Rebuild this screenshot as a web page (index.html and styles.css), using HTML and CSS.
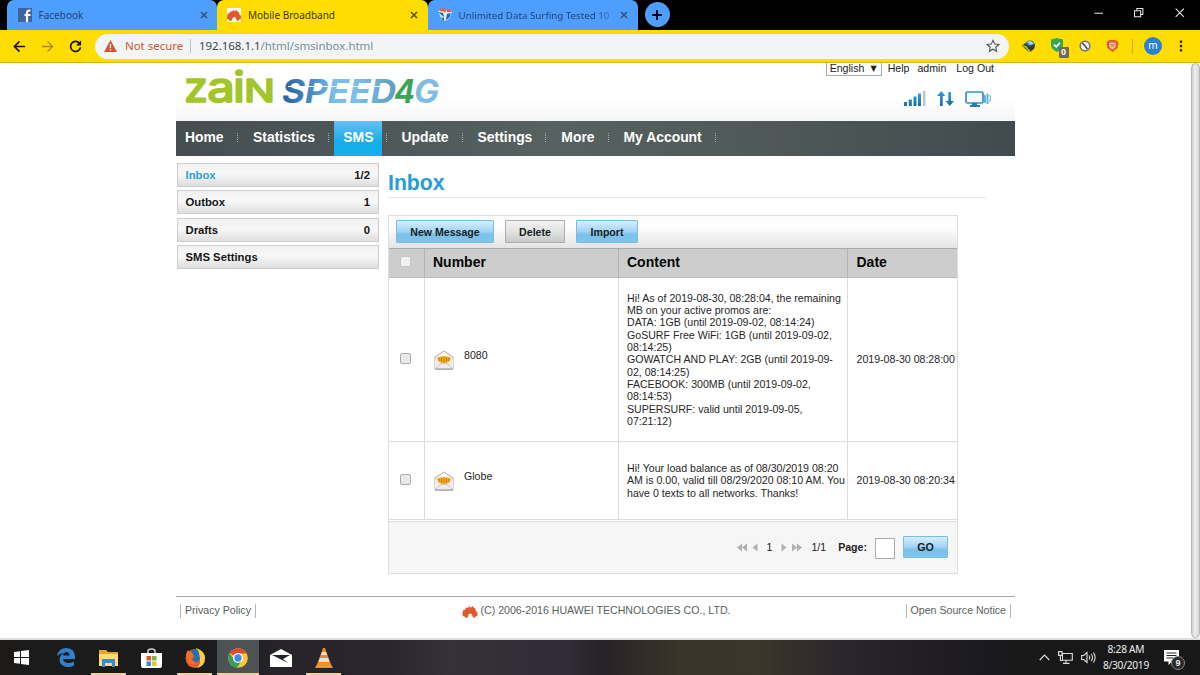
FILE: index.html
```html
<!DOCTYPE html>
<html lang="en">
<head>
<meta charset="utf-8">
<title>Mobile Broadband</title>
<link rel="stylesheet" href="styles.css">
</head>
<body>
<svg width="0" height="0" class="defs">
  <defs>
    <linearGradient id="speed" x1="0" x2="1" y1="0" y2="0">
      <stop offset="0" stop-color="#2a609f"/><stop offset=".28" stop-color="#4c8fcb"/><stop offset=".45" stop-color="#7bbdec"/><stop offset=".65" stop-color="#7bbdec"/><stop offset="1" stop-color="#5d9ebb"/>
    </linearGradient>
    <linearGradient id="sky" x1="0" x2="0" y1="0" y2="1"><stop offset="0" stop-color="#2ba4dd"/><stop offset="1" stop-color="#1c69a8"/></linearGradient>
    <symbol id="huawei" viewBox="0 0 16 14">
      <path d="M0 8 1 5 3 5 3 3 6 3 7 1 9 3 11 1 12 3 14 4 14 6 16 8 16 12 14 12 13 14 11 13 10 10 8 9 6 11 6 13 3 14 2 12 0 12z"/>
    </symbol>
    <symbol id="mail" viewBox="0 0 20 20">
      <path d="M1 7 10 1l9 6v12H1z" fill="#f3f1ee" stroke="#b3aaa5"/>
      <path d="M3.500 6.500 10 3l6.500 3.500v4L10 14l-6.500-3.500z" fill="#fff"/>
      <path d="M3 7.500q7-3 14 0l-1.500 4q-5.500 3-11 0z" fill="#f6a81c"/>
      <path d="M5 8v3M7.500 7.500v4M10 7.500v4.500M12.500 7.500v4M15 8v3" stroke="#c76d12" stroke-width=".8"/>
      <path d="m1 8 6 5.500h6L19 8v11H1z" fill="#efedeb"/>
      <path d="m1.500 18.500 5.500-5h6l5.500 5" fill="none" stroke="#cbc5c1"/>
      <path d="M1 19h18" stroke="#998f8a"/>
    </symbol>
  </defs>
</svg>

<div class="tabstrip">
  <div class="tab">
    <svg class="favicon" viewBox="0 0 14 14"><path fill="#3f639f" d="M0 0h14v14H0z"/><path fill="none" stroke="#fff" stroke-width="2.200" d="M12.500 2.500h-1.300Q9 2.500 9 5v9M6.500 7h6"/></svg>
    <span class="title">Facebook</span>
    <svg class="close" viewBox="0 0 8 8"><path d="m1 1 6 6M7 1 1 7"/></svg>
  </div>
  <div class="tab active">
    <svg class="favicon" viewBox="0 0 14 14"><path fill="#fff" d="M0 0h14v14H0z"/><use href="#huawei" y="1" width="14" height="12" fill="#e4572e"/></svg>
    <span class="title">Mobile Broadband</span>
    <svg class="close" viewBox="0 0 8 8"><path d="m1 1 6 6M7 1 1 7"/></svg>
  </div>
  <div class="tab third">
    <svg class="favicon" viewBox="0 0 14 14"><path fill="#dceaf2" d="m0 3 7-1 7 2-3 7-4 2-4-3z"/><path fill="#e26140" d="m2 0 6 1v3L2 3zM9 1l3 0 1 3-4 0z"/><path fill="#2263a6" d="m0 4 5 1 1 4zM13 5 9 6l-1 6 3-2zM3 9l3 1v3z"/></svg>
    <span class="title fade">Unlimited Data Surfing Tested 10</span>
    <svg class="close" viewBox="0 0 8 8"><path d="m1 1 6 6M7 1 1 7"/></svg>
  </div>
  <div class="newtab"><svg viewBox="0 0 10 10"><path d="M5 0v10M0 5h10"/></svg></div>
  <div class="winbtns">
    <svg viewBox="0 0 10 10"><path d="M.5 5.500h9"/></svg>
    <svg viewBox="0 0 10 10"><path d="M.5 2.800h6.500v6.500H.5zM3 2.500V.6h6.300v6.300H7.300"/></svg>
    <svg viewBox="0 0 10 10"><path d="m.7.7 8.600 8.600M9.300.7.7 9.300"/></svg>
  </div>
</div>

<div class="toolbar">
  <div class="navbtns">
    <svg viewBox="0 0 14 14"><path d="M13 7H2M7 1.500 1.500 7 7 12.500"/></svg>
    <svg class="off" viewBox="0 0 14 14"><path d="M1 7h11M7 1.500 12.500 7 7 12.500"/></svg>
    <svg viewBox="0 0 14 14"><path d="M11.300 3.500A5.400 5.400 0 1 0 12.400 8"/><path d="M13 .5v5.500H7.500z" fill="#191600" stroke="none"/></svg>
  </div>
  <div class="omnibox">
    <svg class="warn" viewBox="0 0 13 12"><path d="M6.500 0 13 12H0z" fill="#d9532c"/><path d="M6.500 4v4M6.500 9v1.500" stroke="#fff" stroke-width="1.300"/></svg>
    <span class="insecure">Not secure</span>
    <span class="url"><b>192.168.1.1</b>/html/smsinbox.html</span>
    <svg class="star" viewBox="0 0 14 14"><path d="m7 1.300 1.700 3.800 4.100.4-3.100 2.800.9 4L7 10.200l-3.600 2.100.9-4-3.100-2.800 4.100-.4z"/></svg>
  </div>
  <div class="exts">
    <svg width="14" height="13" viewBox="0 0 14 13"><circle cx="8" cy="5.500" r="5" fill="#2f6e8e"/><path d="M5 2q4-3 7 2l-4 1z" fill="#a9d2e5"/><path d="m0 6 3-3 3 3 4 1-3 5z" fill="#35421f"/><path d="m1 6 3 1 3 4 4-3" fill="none" stroke="#c5bd2d" stroke-width="1.500"/><path d="m8 6 5-2-1 5-4 3z" fill="#3d3931"/></svg>
    <div class="shield"><svg width="14" height="14" viewBox="0 0 14 14"><path d="m7 0 6 1.500V7q0 4-6 7-6-3-6-7V1.500z" fill="#34a853"/><path d="m4 6.500 2.200 2.300L10 4.800" fill="none" stroke="#fff" stroke-width="1.800"/></svg><span class="badge">0</span></div>
    <svg width="12" height="12" viewBox="0 0 12 12"><circle cx="6" cy="6" r="4.800" fill="#f4f4f8" stroke="#75727c" stroke-width="1.600"/><path d="m3.500 3 5 6" stroke="#4b4754" stroke-width="1.500"/></svg>
    <svg width="13" height="12" viewBox="0 0 13 12"><path d="M2 1 4 0h5l2 1 1.500 2-1 5-5 4-5-4-1-5z" fill="#e8572f"/><path d="m3 3 2.500-.5h2L10 3l-.8 4.500-2.700 2-2.700-2z" fill="#fbd7bf"/><path d="m4 4.300 1.800.7h1.400L9 4.300M5 7l1.500-1L8 7" stroke="#e8572f" fill="none"/></svg>
    <i class="sep"></i>
    <span class="avatar">m</span>
    <svg width="4" height="12" viewBox="0 0 4 12"><path d="M.8.5h2.400v2.400H.8zM.8 4.800h2.400v2.400H.8zM.8 9.100h2.400v2.400H.8z" fill="#39301b"/></svg>
  </div>
</div>

<div class="viewport">
  <div class="page">
    <header>
      <svg class="logo" width="260" height="44" viewBox="0 0 260 44">
        <g class="zain"><text x="-1" y="36" font-size="41" textLength="24" lengthAdjust="spacingAndGlyphs">z</text><text x="22" y="36" font-size="41" textLength="28" lengthAdjust="spacingAndGlyphs">a</text><text x="48" y="36" font-size="41" textLength="12" lengthAdjust="spacingAndGlyphs">i</text><text x="59" y="36" font-size="31" textLength="31" lengthAdjust="spacingAndGlyphs">N</text></g>
        <g class="speed"><text x="97" y="36.500" font-size="32" fill="url(#speed)" textLength="114" lengthAdjust="spacingAndGlyphs">SPEED</text><text x="209" y="36.500" font-size="32" fill="#3ca45a" textLength="21" lengthAdjust="spacingAndGlyphs">4</text><text x="229" y="36.500" font-size="32" fill="#7fbde3" textLength="25" lengthAdjust="spacingAndGlyphs">G</text></g>
        <path d="M103 20.500h102" stroke="#fff" stroke-width="1.200"/>
      </svg>
      <div class="account">
        <div class="links"><span class="lang">English<i>▼</i></span><span>Help</span><span>admin</span><span>Log Out</span></div>
        <div class="status">
          <svg width="22" height="15" viewBox="0 0 22 15"><path fill="url(#sky)" d="M0 11h3v4H0zM4.800 8.500h3V15h-3zM9.500 5.500h3V15h-3zM14 2.500h3V15h-3z"/><path fill="#c4c4c4" d="M19 0h2.500v15H19z"/></svg>
          <svg width="17" height="16" viewBox="0 0 17 16"><path fill="url(#sky)" d="m4.300 0 4 5H5.700v10H3V5H0zM11.400 1H14v9h3l-4.300 5-4-5h2.700z"/></svg>
          <svg width="26" height="16" viewBox="0 0 26 16"><rect x="1" y="1" width="17" height="11" rx="1.500" fill="#f5fbff" stroke="#338fcb" stroke-width="1.700"/><path d="M7 12h5v2h3v2H5v-2h2z" fill="#2577b8"/><path d="M20 4v8M22.500 2.500v10.500" stroke="#5bb1e4" stroke-width="1.900"/><path d="M24.500 4q2 3.500 0 7" fill="none" stroke="#86c6ee" stroke-width="1.400"/></svg>
        </div>
      </div>
    </header>
    <nav><a>Home</a><a>Statistics</a><a class="on">SMS</a><a>Update</a><a>Settings</a><a>More</a><a>My Account</a></nav>
    <div class="columns">
      <aside>
        <div class="item on"><span>Inbox</span><span>1/2</span></div>
        <div class="item"><span>Outbox</span><span>1</span></div>
        <div class="item"><span>Drafts</span><span>0</span></div>
        <div class="item"><span>SMS Settings</span></div>
      </aside>
      <main>
        <h1>Inbox</h1>
        <section class="list">
          <div class="actions"><button class="blue new">New Message</button><button class="del">Delete</button><button class="blue imp">Import</button></div>
          <div class="row head"><div><i class="box"></i></div><div>Number</div><div>Content</div><div>Date</div></div>
          <div class="row first">
            <div><i class="box"></i></div>
            <div class="from"><svg width="20" height="20"><use href="#mail"/></svg><span>8080</span></div>
            <div class="body"><p>Hi! As of 2019-08-30, 08:28:04, the remaining<br>MB on your active promos are:<br>DATA: 1GB (until 2019-09-02, 08:14:24)<br>GoSURF Free WiFi: 1GB (until 2019-09-02,<br>08:14:25)<br>GOWATCH AND PLAY: 2GB (until 2019-09-<br>02, 08:14:25)<br>FACEBOOK: 300MB (until 2019-09-02,<br>08:14:53)<br>SUPERSURF: valid until 2019-09-05,<br>07:21:12)</p></div>
            <div>2019-08-30 08:28:00</div>
          </div>
          <div class="row second">
            <div><i class="box"></i></div>
            <div class="from"><svg width="20" height="20"><use href="#mail"/></svg><span>Globe</span></div>
            <div class="body"><p>Hi! Your load balance as of 08/30/2019 08:20<br>AM is 0.00, valid till 08/29/2020 08:10 AM. You<br>have 0 texts to all networks. Thanks!</p></div>
            <div>2019-08-30 08:20:34</div>
          </div>
          <div class="pager">
            <svg width="21" height="9" viewBox="0 0 21 9"><path d="M5 .5v8L0 4.500zM10 .5v8L5 4.500zM20.500.5v8l-5-4z"/></svg>
            <span class="cur">1</span>
            <svg width="21" height="9" viewBox="0 0 21 9"><path d="M.5.5v8l5-4zM11 .5v8l5-4zM16 .5v8l5-4z"/></svg>
            <span class="total">1/1</span><b>Page:</b><i class="input"></i><button class="blue go">GO</button>
          </div>
        </section>
      </main>
    </div>
    <footer>
      <span class="bars">Privacy Policy</span>
      <span class="copy"><svg width="16" height="13" fill="#e0582f"><use href="#huawei"/></svg>(C) 2006-2016 HUAWEI TECHNOLOGIES CO., LTD.</span>
      <span class="bars">Open Source Notice</span>
    </footer>
  </div>
  <div class="scroll"></div>
</div>

<div class="taskbar">
  <div class="app"><svg width="15" height="15" viewBox="0 0 15 15"><path fill="#fff" d="m0 2 6-.8v5.800H0zM7 1l8-1v7H7zM0 8h6v5.800L0 13zM7 8h8v7l-8-1z"/></svg></div>
  <div class="app"><svg width="18" height="19" viewBox="0 0 18 19"><path fill="#3182ce" d="M0 8Q1.500 0 9.500 0 18 .5 18 9v2H6q.5 4 5.500 4 3 0 5.500-1.500v4Q14 19 11 19q-8-.5-8.500-7Q2.500 7 7 5 3 5 0 8zm6-.5h6.500q0-3.500-3-3.500Q6.500 4 6 7.500z"/></svg></div>
  <div class="app open"><svg width="19" height="18" viewBox="0 0 19 18"><path fill="#e6a62d" d="M0 1h7l2 2h10v14H0z"/><path fill="#f9dc77" d="M0 5h19v12H0z"/><path fill="#3c8ac7" d="M3 10h13v8h-3v-4H6v4H3z"/></svg></div>
  <div class="app"><svg width="21" height="20" viewBox="0 0 21 20"><path d="M7 6V3q0-2 3.500-2T14 3v3" fill="none" stroke="#d6d6d6" stroke-width="1.500"/><path fill="#fff" d="M0 5h21v13q0 2-2 2H2q-2 0-2-2z"/><path fill="#e5532c" d="M5.500 8h4.500v4.500H5.500z"/><path fill="#7db43c" d="M11 8h4.500v4.500H11z"/><path fill="#2b91d5" d="M5.500 13.500h4.500V18H5.500z"/><path fill="#f5b92e" d="M11 13.500h4.500V18H11z"/></svg></div>
  <div class="app open"><svg width="20" height="20" viewBox="0 0 20 20"><circle cx="10" cy="10.500" r="9.500" fill="#e75c26"/><path d="M11 0q9 3 9 10 0 8-8 10 5-5 2-12z" fill="#fbd144"/><path d="M6 3q3-3 7-1l1 3 1 6q-2 4-5 3l-3-3 3-2-3-1z" fill="#2470b5"/><path d="M1 6q1-2 2-4 1 2 4 3l2 3-3 2q1 5 6 4-4 4-8 1z" fill="#ef702b"/></svg></div>
  <div class="app open current"><svg width="20" height="20" viewBox="0 0 20 20"><circle cx="10" cy="10" r="9.800" fill="#fbc938"/><path d="M10 10 1.500 5A10 10 0 0 1 18.800 5.500H10z" fill="#dc4b36"/><path d="m10 10-4 1L1.500 5A10 10 0 0 0 9 19.800L13.500 13z" fill="#36a159"/><circle cx="10" cy="10" r="4.900" fill="#fff"/><circle cx="10" cy="10" r="3.700" fill="#4688e8"/></svg></div>
  <div class="app"><svg width="22" height="18" viewBox="0 0 22 18"><path d="M0 6 11 0l11 6v12H0z" fill="#fff"/><path d="m2 6 18 0-7 4 5 4L2 6z" fill="#24222a"/></svg></div>
  <div class="app open"><svg width="18" height="20" viewBox="0 0 18 20"><path d="m8 0 2 0 5 14H3z" fill="#f08a24"/><path d="m7 4 4 0 1 3H6zM4.800 10h8.400l1.200 4H3.600z" fill="#e6e1dc"/><path d="m3 14 12 0 3 6H0z" fill="#f0811e"/><path d="M3 16h12M1.500 18.500h15" stroke="#f9b33b" stroke-width=".8"/></svg></div>
  <div class="tray">
    <svg width="11" height="7" viewBox="0 0 11 7"><path d="m.7 6 4.800-5 4.800 5"/></svg>
    <svg width="15" height="13" viewBox="0 0 15 13"><path d="M4.500 2.500h9.800v6.800H4.500zM8 9.500v3M5 12.400h6.500M.6.600h3.500v3.800H.6zM2.400 4.500v5h2"/></svg>
    <svg width="15" height="13" viewBox="0 0 15 13"><path d="M.6 4.500h2.200L6 1.500v10L2.800 8.500H.6zM8 4.500q1.400 2 0 4M10.300 3q2.400 3.500 0 7M12.500 1.500q3.200 5 0 10"/></svg>
    <div class="clock">8:28 AM<br>8/30/2019</div>
    <div class="note"><svg width="15" height="15" viewBox="0 0 15 15"><path d="M0 0h15v11.500H8L4.500 15v-3.500H0z" fill="#fff"/><path d="M2.500 3h10M2.500 5.500h10M2.500 8h7" stroke="#26242a"/></svg><span class="count">9</span></div>
  </div>
</div>
</body>
</html>
```
FILE: styles.css
```css
* { box-sizing: border-box; }
body { margin: 0; width: 1200px; height: 675px; overflow: hidden; display: flex; flex-direction: column; font-family: "Liberation Sans", Arial, sans-serif; background: #fff; }
svg { display: block; flex: none; }
i { font-style: normal; }
.defs { position: absolute; }

.tabstrip { height: 30px; flex: none; display: flex; background: #000; padding-left: 7px; font: 10px "Noto Sans", sans-serif; }
.tab { width: 210px; height: 30px; display: flex; align-items: center; background: #4d9eff; border-radius: 7px 7px 0 0; padding: 0 9px 0 10.500px; color: #25466f; }
.tab.active { background: #fd0; color: #40380b; width: 211px; padding: 0 10px; }
.tab.third { padding: 0 10px 0 9.500px; }
.tab .favicon { width: 14px; height: 14px; margin-right: 7px; }
.tab .title { flex: 1; white-space: nowrap; }
.tab .fade { font-size: 9.75px; -webkit-mask-image: linear-gradient(90deg, #000 85%, rgba(0,0,0,.25) 96%); }
.close { width: 8px; height: 8px; stroke: #35506f; stroke-width: 1.5; }
.active .close { stroke: #5c4e10; }
.newtab { width: 25px; height: 25px; margin: 2px 0 0 6.500px; border-radius: 50%; background: #4d9eff; display: flex; align-items: center; justify-content: center; }
.newtab svg { width: 10px; height: 10px; stroke: #001; stroke-width: 1.8; }
.winbtns { margin: 8px 16px 0 auto; display: flex; gap: 31px; }
.winbtns svg { width: 9.500px; height: 9.500px; fill: none; stroke: #e6e6e6; stroke-width: 1.1; }

.toolbar { height: 33px; flex: none; display: flex; align-items: center; background: #fd0; border-bottom: 1px solid #d9b31f; padding: 0 17px 0 13px; }
.navbtns { display: flex; gap: 15px; width: 82px; }
.navbtns svg { width: 13px; height: 13px; fill: none; stroke: #191600; stroke-width: 1.8; }
.navbtns .off { stroke: #a9881e; stroke-width: 1.4; }
.omnibox { width: 914px; height: 25px; border-radius: 13px; background: #f2f4f5; display: flex; align-items: center; padding: 0 9px; font: 11.45px "Noto Sans", sans-serif; }
.omnibox span { margin-top: -1px; }
.warn { width: 13px; height: 12px; margin-right: 8px; }
.insecure { color: #d0592f; width: 66px; border-right: 1px solid #bfc1c3; line-height: 14px; white-space: nowrap; margin-right: 8px; }
.url { flex: 1; color: #7593a0; white-space: nowrap; }
.url b { font-weight: 400; color: #34444c; }
.star { width: 14px; height: 14px; fill: none; stroke: #555; stroke-width: 1.1; }
.exts { flex: 1; display: flex; align-items: center; margin-left: 12.500px; }
.exts > * { margin-right: 15px; }
.shield { position: relative; margin-top: -2px; }
.badge { position: absolute; left: 9px; top: 9px; width: 10px; height: 11px; background: #6f6a5e; color: #fff; font: bold 9px/11px "Liberation Sans", sans-serif; text-align: center; border-radius: 1px; }
.exts .sep { width: 1px; height: 15px; background: #cda619; margin: 0 11px 0 -2px; }
.avatar { width: 18px; height: 18px; border-radius: 50%; background: #2783cf; color: #fff; font: 10px/17px "Noto Sans", sans-serif; text-align: center; }
.exts > :nth-child(1) { margin-right: 14px; }
.exts > :nth-child(2) { margin-right: 15.500px; }
.exts > :last-child { margin: 0 0 0 auto; }

.viewport { height: 577px; flex: none; display: flex; justify-content: space-between; border-bottom: 2px solid #dedede; }
.page { width: 839px; margin-left: 176px; }
.scroll { width: 9px; height: 575px; border: 1px solid #b5b5b5; border-radius: 5px; background: linear-gradient(90deg, #ccc, #eee 40%, #d8d8d8); }
header { height: 58px; display: flex; justify-content: space-between; background: linear-gradient(#fff 60%, #f6f6f6); }
.logo { margin: 3px 0 0 9px; overflow: visible; }
.zain { font-family: "Inter", sans-serif; font-weight: 500; fill: #a2c52a; stroke: #a2c52a; stroke-width: 1.3; stroke-linejoin: round; }
.speed { font-family: "Inter", sans-serif; font-weight: 700; font-style: italic; }
.account { display: flex; flex-direction: column; }
.links { display: flex; height: 13px; padding-right: 21px; font-size: 10.6px; line-height: 11px; color: #202020; white-space: nowrap; }
.links span { margin-left: 8px; }
.links span:last-child { margin-left: 10px; }
.links .lang { width: 56px; margin: 0 -2px 0 0; border: 1px solid #aaa; border-top: 0; padding: 0 4px 0 3px; display: flex; justify-content: space-between; }
.lang i { font: 8px/11px "DejaVu Sans", sans-serif; }
.status { display: flex; justify-content: flex-end; align-items: flex-start; margin: 15px 24px 0 0; gap: 11px; }
nav { height: 34.500px; background: linear-gradient(90deg, #454d51, #566160 45%, #4f5857 72%, #414b4f); display: flex; color: #fff; font-weight: bold; font-size: 13.9px; line-height: 32px; white-space: nowrap; }
nav a { display: flex; align-items: center; padding-left: 15px; padding-bottom: 2px; }
nav a:first-child { padding-left: 9px; padding-right: .5px; }
nav a:after { content: ""; height: 9px; border-left: 1px dotted #a3abac; margin-left: 13px; }
nav .on { background: linear-gradient(#6bbdf2, #14aee9 60%, #14b0e9); padding: 0 9px 2px; margin: 0 3px 0 5.500px; }
nav .on:after { display: none; }
nav .on + a:before { content: ""; height: 9px; border-left: 1px dotted #a3abac; margin-right: 14px; }
nav .on + a { padding-left: 1px; }
.columns { display: flex; height: 440.500px; }
aside { width: 203px; padding: 7.500px 0 0 1px; display: flex; flex-direction: column; gap: 3.400px; }
.item { height: 24px; border: 1px solid #cecece; background: linear-gradient(#f1f1f1, #f8f8f8 45%, #dedede); display: flex; justify-content: space-between; font: bold 11.3px/22px "Liberation Sans", sans-serif; padding: 0 8px 0 7.500px; color: #151515; }
.item.on span:first-child { color: #2b9fd9; }
main { width: 598px; margin-left: 9px; }
h1 { margin: 0; height: 42.500px; border-bottom: 1px solid #e6e6e6; font-size: 21.2px; line-height: 24px; padding-top: 15.500px; color: #269bd5; }
.list { width: 570px; margin-top: 17px; border: 1px solid #dedede; }
.actions { height: 32px; background: linear-gradient(#fafafa, #fff 30%, #e4e4e4); display: flex; align-items: center; padding: 0 7px 1px; gap: 11px; }
button { height: 23px; padding: 0; border: 1px solid #adadad; border-radius: 1px; background: linear-gradient(#f4f4f4, #dedede 60%, #c9c9c9); font: bold 10.6px "Liberation Sans", sans-serif; color: #151c24; }
.blue { border-color: #77bde5; background: linear-gradient(#d5effe, #a1d3f2 50%, #7ac0e9 65%, #82c5ec); }
.new { width: 98px; }
.del { width: 60px; }
.imp { width: 62px; }
.row { display: grid; grid-template-columns: 34.500px 194px 229.500px 1fr; border-bottom: 1px solid #dcdcdc; font-size: 10.6px; line-height: 12.3px; color: #262626; white-space: nowrap; }
.row > div { display: flex; align-items: center; border-left: 1px solid #dcdcdc; padding-left: 8.500px; }
.row > div:first-child { border: 0; padding-left: 11px; padding-bottom: 3px; }
.row p { margin: 0; }
.head { height: 30px; background: #cdcdcd; border-top: 1px solid #aaa; border-bottom-color: #bbb; font: bold 14px "Liberation Sans", sans-serif; color: #050505; }
.head > div { border-color: #b3b3b3; padding-bottom: 2px; }
.first { height: 164px; }
.second { height: 78px; }
.row .from { gap: 10px; padding: 1px 0 0 9.500px; }
.from span { margin-bottom: 9px; }
.box { width: 11px; height: 11px; border: 1px solid #aaa; border-radius: 2px; background: #e9e9e9; }
.head .box { background: #f0f0f0; border-color: #c5c5c5; }
.pager { height: 52px; margin-top: 1px; border-top: 1px solid #dedede; background: #f6f6f6; display: flex; align-items: center; justify-content: flex-end; padding: 0 9px 1px 0; font-size: 10.6px; color: #222; }
.pager svg { fill: #b0b0b0; }
.cur { margin: 0 9px 0 9px; }
.total { margin: 0 12px 0 9px; }
.input { width: 20px; height: 21px; margin: 3px 8px 0 8px; border: 1px solid #adadad; background: #fff; }
.go { width: 45px; height: 22px; }
footer { border-top: 1px solid #a9a9a9; display: grid; grid-template-columns: 1fr auto 1fr; padding: 7px 4px 0; font-size: 10.6px; line-height: 13px; color: #57615c; white-space: nowrap; }
.bars { border: solid #b5b5b5; border-width: 0 1px; padding: 0 4px; justify-self: start; }
.bars:last-child { justify-self: end; }
.copy { display: flex; gap: 3px; margin-left: 1px; }
.copy svg { margin-top: 1px; }

.taskbar { height: 35px; flex: none; display: flex; background: linear-gradient(90deg, #1c1b1a, #1c1b1c 200px, #26232b 280px, #29262f 390px, #35313a 450px, #302b36 570px, #272129 600px, #3b3428 680px, #3c3529 760px, #29242d 850px, #1e1b25 950px, #181819 1020px); }
.app { width: 43px; display: flex; align-items: center; justify-content: center; }
.app:nth-child(2) { margin-left: 1px; }
.app.open { border-bottom: 2px solid #f3ce9a; padding-top: 2px; width: 35px; margin: 0 4px; }
.app.current { width: 42px; margin: 0 1px; background: #4c5352; }
.app:nth-child(7) { margin-left: -1px; }
.tray { margin-left: auto; display: flex; align-items: center; gap: 8px; padding-right: 21px; color: #eee; }
.tray > svg { fill: none; stroke: #ddd; stroke-width: 1.1; }
.clock { font: 10.2px/16px "Noto Sans", sans-serif; letter-spacing: -.25px; text-align: center; margin: -2px 7px 0 -1px; }
.note { position: relative; }
.count { position: absolute; left: 7px; top: 6px; width: 14px; height: 14px; border-radius: 50%; border: 1px solid #888; background: #29282b; font: bold 9px/12px "Liberation Sans", sans-serif; text-align: center; }
```
